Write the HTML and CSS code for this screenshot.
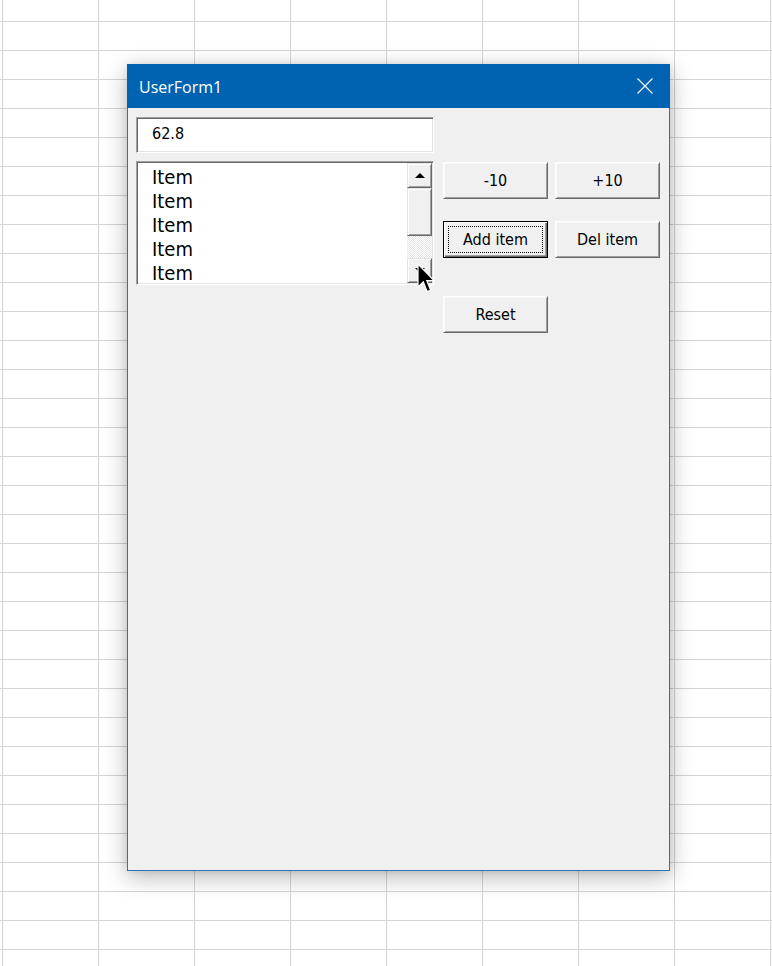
FILE: index.html
```html
<!DOCTYPE html>
<html lang="en">
<head>
<meta charset="utf-8">
<title>UserForm1</title>
<link rel="stylesheet" href="styles.css">
</head>
<body>
<div class="sheet">
  <div class="window">
    <div class="titlebar">
      <span class="title">UserForm1</span>
      <svg class="close" width="16" height="16" viewBox="0 0 16 16" aria-hidden="true">
        <path d="M0.5 0.5 L15.5 15.5 M15.5 0.5 L0.5 15.5" stroke="#ffffff" stroke-width="1.1" fill="none"/>
      </svg>
    </div>
    <div class="form">
      <div class="col-left">
        <div class="textbox">62.8</div>
        <div class="listbox">
          <div class="items">
            <div class="item">Item</div>
            <div class="item">Item</div>
            <div class="item">Item</div>
            <div class="item">Item</div>
            <div class="item">Item</div>
          </div>
          <div class="scrollbar">
            <div class="sb-btn">
              <svg width="10" height="5" viewBox="0 0 10 5" aria-hidden="true"><path d="M5 0 L10 5 L0 5 Z" fill="#000"/></svg>
            </div>
            <div class="sb-thumb"></div>
            <div class="sb-track"></div>
            <div class="sb-btn">
              <svg width="10" height="5" viewBox="0 0 10 5" aria-hidden="true"><path d="M0 0 L10 0 L5 5 Z" fill="#000"/></svg>
            </div>
          </div>
        </div>
      </div>
      <div class="col-right">
        <div class="btn-row row1">
          <div class="btn">-10</div>
          <div class="btn">+10</div>
        </div>
        <div class="btn-row row2">
          <div class="btn default"><span class="focus">Add item</span></div>
          <div class="btn">Del item</div>
        </div>
        <div class="btn-row row3">
          <div class="btn">Reset</div>
        </div>
      </div>
    </div>
  </div>
  <svg class="cursor" width="18" height="31" viewBox="0 0 18 31" aria-hidden="true">
    <path d="M1 1 L1 24 L6.3 18.8 L10.2 28.6 L13.6 27.2 L9.8 17.6 L17 17.6 Z" fill="#000" stroke="#fff" stroke-width="1.2" stroke-linejoin="miter"/>
  </svg>
</div>
</body>
</html>
```
FILE: styles.css
```css
html, body {
  margin: 0;
  padding: 0;
  background: #ffffff;
}

.sheet {
  position: relative;
  width: 772px;
  height: 966px;
  box-sizing: border-box;
  padding: 64px 0 0 127px;
  overflow: hidden;
  background-color: #ffffff;
  background-image:
    linear-gradient(90deg, #d4d4d4 1px, transparent 1px),
    linear-gradient(180deg, #d4d4d4 1px, transparent 1px);
  background-size: 96px 100%, 100% 29px;
  background-position: 2px 0, 0 21px;
}

.window {
  width: 543px;
  height: 807px;
  box-sizing: border-box;
  border: 1px solid #2c72b6;
  border-top: 0;
  background: #f0f0f0;
  display: flex;
  flex-direction: column;
  box-shadow: 0 6px 22px rgba(0, 0, 0, 0.28), 0 0 8px rgba(0, 0, 0, 0.08);
}

.titlebar {
  height: 44px;
  margin: 0 -1px;
  box-sizing: border-box;
  padding: 2px 17px 0 12px;
  background: #0063b1;
  display: flex;
  align-items: center;
  justify-content: space-between;
  flex-shrink: 0;
}

.title {
  font-family: "Open Sans", "Noto Sans", sans-serif;
  font-size: 16px;
  line-height: 42px;
  color: #ffffff;
}

.close {
  display: block;
  margin-top: -2px;
}

.form {
  display: flex;
  padding: 9px 8px 0 8px;
  font-family: "DejaVu Sans Condensed", "DejaVu Sans", sans-serif;
  color: #000000;
}

.col-left {
  width: 298px;
  display: flex;
  flex-direction: column;
  gap: 8px;
}

.textbox {
  height: 36px;
  box-sizing: border-box;
  border: 1px solid;
  border-color: #a0a0a0 #ffffff #ffffff #a0a0a0;
  box-shadow: inset 1px 1px #696969, inset -1px -1px #e3e3e3;
  background: #ffffff;
  padding: 1px 0 0 15px;
  font-size: 16px;
  line-height: 30px;
}

.listbox {
  height: 124px;
  box-sizing: border-box;
  border: 1px solid;
  border-color: #a0a0a0 #ffffff #ffffff #a0a0a0;
  box-shadow: inset 1px 1px #696969, inset -1px -1px #e3e3e3;
  background: #ffffff;
  padding: 1px;
  display: flex;
}

.items {
  flex: 1;
  padding: 2px 0 0 14px;
}

.item {
  font-size: 20px;
  line-height: 24px;
  height: 24px;
}

.item:last-child {
  line-height: 23px;
  height: 22px;
  padding-top: 1px;
}

.scrollbar {
  width: 25px;
  display: flex;
  flex-direction: column;
}

.sb-btn,
.sb-thumb {
  box-sizing: border-box;
  border: 1px solid;
  border-color: #e3e3e3 #696969 #696969 #e3e3e3;
  box-shadow: inset 1px 1px #ffffff, inset -1px -1px #a0a0a0;
  background: #f0f0f0;
}

.sb-btn {
  height: 25px;
  display: flex;
  align-items: center;
  justify-content: center;
}

.sb-btn svg {
  display: block;
}

.sb-thumb {
  height: 48px;
}

.sb-track {
  flex: 1;
  background-color: #ffffff;
  background-image: repeating-conic-gradient(#ffffff 0 25%, #e4e4e4 0 50%);
  background-size: 2px 2px;
}

.col-right {
  margin-left: 9px;
  padding-top: 45px;
  display: flex;
  flex-direction: column;
}

.btn-row {
  display: flex;
  gap: 7px;
}

.row2 {
  margin-top: 22px;
}

.row3 {
  margin-top: 38px;
}

.btn {
  width: 105px;
  height: 37px;
  box-sizing: border-box;
  border: 1px solid;
  border-color: #ffffff #696969 #696969 #ffffff;
  box-shadow: inset 1px 1px #f8f8f8, inset -1px -1px #a0a0a0;
  background: #f0f0f0;
  display: flex;
  align-items: center;
  justify-content: center;
  font-size: 16px;
  line-height: 20px;
}

.btn.default {
  border-color: #000000;
  box-shadow: inset 1px 1px #ffffff, inset -1px -1px #696969, inset -2px -2px #a0a0a0;
  padding: 4px;
  align-items: stretch;
}

.focus {
  flex: 1;
  border: 1px dotted #000000;
  display: flex;
  align-items: center;
  justify-content: center;
}

.cursor {
  position: absolute;
  left: 417px;
  top: 263px;
  display: block;
}
```
